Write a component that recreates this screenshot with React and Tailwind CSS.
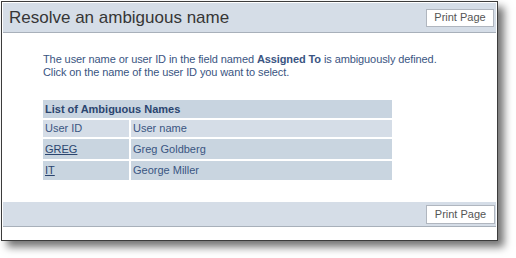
export default function App() {
  const font = { fontFamily: '"Liberation Sans", Arial, sans-serif' };
  return (
    <div className="w-[516px] h-[258px] bg-white pt-[1px] pl-[1px]" style={font}>
      <div className="w-[497px] h-[240px] border border-[#3c3c3c] bg-white p-[1px] flex flex-col shadow-[6px_6px_8px_rgba(0,0,0,0.55)]">
        <div className="h-[30px] bg-[#d5dde7] border-b border-[#a8b0ba] flex items-center justify-between pl-[6px] pr-[2px]">
          <span className="text-[17px] text-[#363636] leading-none">Resolve an ambiguous name</span>
          <button className="w-[68px] h-[18px] bg-white border border-[#b0b6bf] text-[11px] text-[#555] leading-none">Print Page</button>
        </div>
        <div className="flex-1 pl-[40px] pt-[20px]">
          <p className="text-[11px] leading-[13px] text-[#3a5582] tracking-[-0.1px]">
            The user name or user ID in the field named <b>Assigned To</b> is ambiguously defined.
            <br />
            Click on the name of the user ID you want to select.
          </p>
          <div className="mt-[21px] w-[349px] grid grid-cols-[86px_1fr] gap-[2px] text-[11px] text-[#3a5582]">
            <div className="col-span-2 h-[18px] bg-[#c8d4e0] flex items-center pl-[2px] font-bold text-[#2b456f]">List of Ambiguous Names</div>
            <div className="h-[17px] bg-[#d5dde7] flex items-center pl-[2px]">User ID</div>
            <div className="h-[17px] bg-[#d5dde7] flex items-center pl-[2px]">User name</div>
            <div className="h-[20px] bg-[#c9d5e0] flex items-center pl-[2px]"><a className="underline text-[#2b456f]">GREG</a></div>
            <div className="h-[20px] bg-[#c9d5e0] flex items-center pl-[2px]">Greg Goldberg</div>
            <div className="h-[19px] bg-[#c9d5e0] flex items-center pl-[2px]"><a className="underline text-[#2b456f]">IT</a></div>
            <div className="h-[19px] bg-[#c9d5e0] flex items-center pl-[2px]">George Miller</div>
          </div>
        </div>
        <div className="h-[25px] bg-[#d5dde7] border-b border-[#a8b0ba] flex items-center justify-end pr-[1px]">
          <button className="w-[69px] h-[19px] bg-white border border-[#b0b6bf] text-[11px] text-[#555] leading-none">Print Page</button>
        </div>
        <div className="h-[12px]" />
      </div>
    </div>
  );
}
